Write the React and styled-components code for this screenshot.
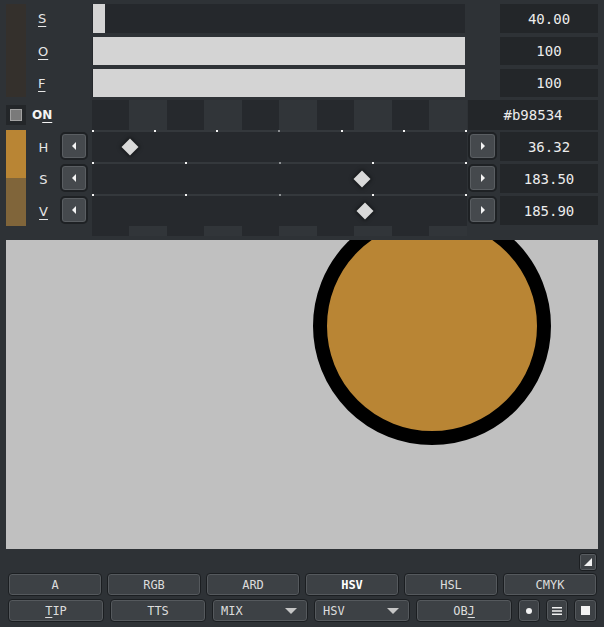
import React from "react";
import styled, { createGlobalStyle } from "styled-components";

const GlobalStyle = createGlobalStyle`
  html, body {
    margin: 0;
    padding: 0;
    background: #2e3236;
    overflow: hidden;
  }
`;

const COLS = "20px 34px 28px 4px 375px 1px 29px 3px 98px";

const Page = styled.div`
  width: 604px;
  height: 627px;
  background: #2e3236;
  font-family: "DejaVu Sans", "Liberation Sans", sans-serif;
  color: #e2e2e2;
  display: flex;
  flex-direction: column;
`;

const TopGrid = styled.div`
  display: grid;
  grid-template-columns: ${COLS};
  grid-template-rows: 29px 28px 28px;
  row-gap: 4px;
  padding: 4px 6px 0;
`;

const MidGrid = styled.div`
  display: grid;
  grid-template-columns: ${COLS};
  grid-template-rows: 30px 32px 32px 32px 10px;
  margin-top: 3px;
  padding: 0 6px;
`;

const AlphaSwatch = styled.div`
  grid-column: 1;
  grid-row: 1 / 4;
  background: #34302c;
`;

const Label = styled.div`
  grid-column: 2;
  grid-row: ${(p) => p.$row};
  display: flex;
  align-items: center;
  padding-left: ${(p) => (p.$center ? "1px" : "12px")};
  justify-content: ${(p) => (p.$center ? "center" : "flex-start")};
  padding-top: ${(p) => (p.$center ? "2px" : "0")};
  font-size: 13px;
  color: #e6e6e6;
  u {
    text-underline-offset: 3px;
  }
`;

const Bar = styled.div`
  grid-column: 5;
  grid-row: ${(p) => p.$row};
  margin-right: 2px;
  background: #25282c;
  display: flex;
`;

const BarFill = styled.div`
  width: ${(p) => p.$fill}%;
  min-width: 12px;
  margin-left: 1px;
  background: #d4d4d4;
`;

const ValueBox = styled.div`
  grid-column: ${(p) => p.$col || "9"};
  grid-row: ${(p) => p.$row};
  margin-top: ${(p) => (p.$offset ? "2px" : "0")};
  height: ${(p) => (p.$offset ? "29px" : "auto")};
  background: #232629;
  display: flex;
  align-items: center;
  justify-content: center;
  font-family: "DejaVu Sans Mono", "Liberation Mono", monospace;
  font-size: 14px;
  color: #ececec;
`;

const CheckCell = styled.div`
  grid-column: 1;
  grid-row: 1;
  align-self: center;
  width: 20px;
  height: 20px;
  background: #232629;
  display: flex;
  align-items: center;
  justify-content: center;
`;

const CheckMark = styled.div`
  width: 10px;
  height: 10px;
  background: #7a7a7a;
  border: 1px solid #a2a2a2;
`;

const OnLabel = styled.div`
  grid-column: 2 / 4;
  grid-row: 1;
  display: flex;
  align-items: center;
  padding-left: 6px;
  font-size: 12px;
  font-weight: bold;
  color: #f4f4f4;
  u {
    text-underline-offset: 3px;
  }
`;

const Checker = styled.div`
  grid-column: 5;
  grid-row: 1 / 6;
  background: repeating-linear-gradient(
    90deg,
    #26292d 0 37.5px,
    #313539 37.5px 75px
  );
`;

const ColorSwatch = styled.div`
  grid-column: 1;
  grid-row: 2 / 5;
  display: flex;
  flex-direction: column;
`;

const SwatchHalf = styled.div`
  flex: 1;
  background: ${(p) => p.$color};
`;

const TrackStack = styled.div`
  grid-column: 5;
  grid-row: 2 / 5;
  display: flex;
  flex-direction: column;
`;

const Sep = styled.div`
  height: 2px;
  background: #34383c;
  display: flex;
  justify-content: space-between;
`;

const Tick = styled.span`
  width: 2px;
  height: 2px;
  background: ${(p) => (p.$dim ? "#8d9093" : "#f2f2f2")};
`;

const Track = styled.div`
  height: 30px;
  background: #26292d;
  position: relative;
`;

const Marker = styled.div`
  position: absolute;
  top: 9px;
  width: 12px;
  height: 12px;
  margin-left: -6px;
  background: #d9d9d9;
  transform: rotate(45deg);
  box-shadow: 0 0 4px 1px rgba(0, 0, 0, 0.5);
`;

const ArrowButton = styled.button`
  grid-column: ${(p) => (p.$right ? 7 : 3)};
  grid-row: ${(p) => p.$row};
  margin-top: 2px;
  height: 28px;
  padding: 0;
  border: 2px solid #1e2124;
  border-radius: 5px;
  background: #45494d;
  box-shadow: inset 0 0 0 1px #5a5e62;
  display: flex;
  align-items: center;
  justify-content: center;
  &::after {
    content: "";
    border-top: 4px solid transparent;
    border-bottom: 4px solid transparent;
    ${(p) =>
      p.$right
        ? "border-left: 4px solid #f4f4f4;"
        : "border-right: 4px solid #f4f4f4;"}
  }
`;

const Canvas = styled.div`
  margin: 4px 6px 0;
  height: 309px;
  background: #c0c0c0;
  overflow: hidden;
  svg {
    display: block;
  }
`;

const Bottom = styled.div`
  display: flex;
  flex-direction: column;
  padding: 4px 7px 0 8px;
`;

const ResizeButton = styled.button`
  align-self: flex-end;
  width: 18px;
  height: 18px;
  padding: 0;
  border: 1px solid #1b1e21;
  border-radius: 3px;
  background: #3f4347;
  box-shadow: inset 0 0 0 1px #585c60;
  display: flex;
  align-items: center;
  justify-content: center;
`;

const ButtonRow = styled.div`
  display: grid;
  grid-template-columns: ${(p) => p.$cols};
  column-gap: ${(p) => p.$gap}px;
  height: 23px;
  margin-top: ${(p) => p.$top}px;
`;

const Btn = styled.button`
  height: 100%;
  padding: ${(p) => (p.$drop ? "0 10px 0 8px" : "0")};
  border: 1px solid #1b1e21;
  border-radius: 4px;
  background: #3d4145;
  box-shadow: inset 0 0 0 1px #55595d;
  color: ${(p) => (p.$bold ? "#ffffff" : "#dcdcdc")};
  font-family: "DejaVu Sans Mono", "Liberation Mono", monospace;
  font-size: 12px;
  font-weight: ${(p) => (p.$bold ? "bold" : "normal")};
  display: flex;
  align-items: center;
  justify-content: ${(p) => (p.$drop ? "space-between" : "center")};
  u {
    text-underline-offset: 2px;
  }
`;

const Caret = styled.span`
  border-left: 6px solid transparent;
  border-right: 6px solid transparent;
  border-top: 6px solid #c6c6c6;
`;

const Dot = styled.span`
  width: 6px;
  height: 6px;
  border-radius: 50%;
  background: #f2f2f2;
`;

const Square = styled.span`
  width: 9px;
  height: 9px;
  background: #f2f2f2;
`;

const sliders = [
  { key: "S", value: "40.00", fill: 2.9 },
  { key: "O", value: "100", fill: 100 },
  { key: "F", value: "100", fill: 100 },
];

const hsv = [
  { key: "H", value: 36.32, max: 360, ticks: 7, under: false },
  { key: "S", value: 183.5, max: 255, ticks: 5, under: false },
  { key: "V", value: 185.9, max: 255, ticks: 5, under: true },
];

const Ticks = ({ count }) => (
  <Sep>
    {Array.from({ length: count }, (_, i) => (
      <Tick key={i} $dim={i === Math.floor(count / 2)} />
    ))}
  </Sep>
);

export default function App() {
  return (
    <Page>
      <GlobalStyle />
      <TopGrid>
        <AlphaSwatch />
        {sliders.map((s, i) => (
          <React.Fragment key={s.key}>
            <Label $row={i + 1}>
              <u>{s.key}</u>
            </Label>
            <Bar $row={i + 1}>
              <BarFill $fill={s.fill} />
            </Bar>
            <ValueBox $row={i + 1}>{s.value}</ValueBox>
          </React.Fragment>
        ))}
      </TopGrid>

      <MidGrid>
        <CheckCell>
          <CheckMark />
        </CheckCell>
        <OnLabel>
          O<u>N</u>
        </OnLabel>
        <Checker />
        <ValueBox $row={1} $col="7 / 10">
          #b98534
        </ValueBox>
        <ColorSwatch>
          <SwatchHalf $color="#b98534" />
          <SwatchHalf $color="#80653a" />
        </ColorSwatch>
        <TrackStack>
          {hsv.map((c) => (
            <React.Fragment key={c.key}>
              <Ticks count={c.ticks} />
              <Track>
                <Marker style={{ left: `${(c.value / c.max) * 100}%` }} />
              </Track>
            </React.Fragment>
          ))}
        </TrackStack>
        {hsv.map((c, i) => (
          <React.Fragment key={c.key}>
            <Label $row={i + 2} $center>
              {c.under ? <u>{c.key}</u> : c.key}
            </Label>
            <ArrowButton $row={i + 2} />
            <ArrowButton $row={i + 2} $right />
            <ValueBox $row={i + 2} $offset>
              {c.value.toFixed(2)}
            </ValueBox>
          </React.Fragment>
        ))}
      </MidGrid>

      <Canvas>
        <svg width="592" height="309" viewBox="0 0 592 309">
          <circle cx="426" cy="86" r="112" fill="#b98534" stroke="#000" strokeWidth="14" />
        </svg>
      </Canvas>

      <Bottom>
        <ResizeButton>
          <svg width="8" height="8" viewBox="0 0 8 8">
            <polygon points="8,0 8,8 0,8" fill="#f2f2f2" />
          </svg>
        </ResizeButton>
        <ButtonRow $cols="repeat(6, 1fr)" $gap={5} $top={2}>
          <Btn>A</Btn>
          <Btn>RGB</Btn>
          <Btn>ARD</Btn>
          <Btn $bold>HSV</Btn>
          <Btn>HSL</Btn>
          <Btn>CMYK</Btn>
        </ButtonRow>
        <ButtonRow $cols="repeat(5, 1fr) 22px 22px 23px" $gap={6} $top={3}>
          <Btn>
            <span>
              <u>T</u>IP
            </span>
          </Btn>
          <Btn>TTS</Btn>
          <Btn $drop>
            MIX
            <Caret />
          </Btn>
          <Btn $drop>
            HSV
            <Caret />
          </Btn>
          <Btn>
            <span>
              OB<u>J</u>
            </span>
          </Btn>
          <Btn>
            <Dot />
          </Btn>
          <Btn>
            <svg width="10" height="8" viewBox="0 0 10 8">
              <rect x="0" y="0" width="10" height="1.5" fill="#f2f2f2" />
              <rect x="0" y="3.25" width="10" height="1.5" fill="#f2f2f2" />
              <rect x="0" y="6.5" width="10" height="1.5" fill="#f2f2f2" />
            </svg>
          </Btn>
          <Btn>
            <Square />
          </Btn>
        </ButtonRow>
      </Bottom>
    </Page>
  );
}
